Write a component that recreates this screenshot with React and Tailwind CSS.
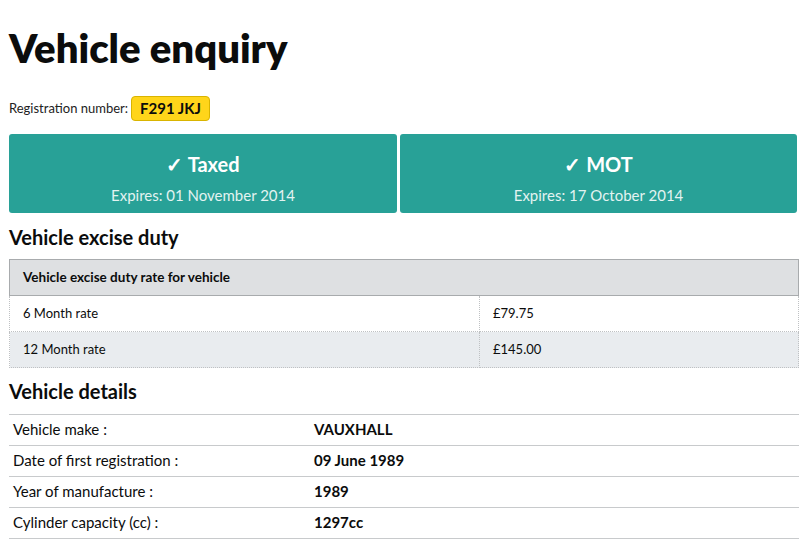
export default function App() {
  const rates = [
    { label: "6 Month rate", value: "£79.75", bg: "bg-white" },
    { label: "12 Month rate", value: "£145.00", bg: "bg-[#e9ecef]" },
  ];

  const details = [
    { label: "Vehicle make :", value: "VAUXHALL" },
    { label: "Date of first registration :", value: "09 June 1989" },
    { label: "Year of manufacture :", value: "1989" },
    { label: "Cylinder capacity (cc) :", value: "1297cc" },
  ];

  return (
    <div className="min-h-[541px] bg-white pl-[9px] pr-px text-[#0b0c0c] font-['Lato',sans-serif]">
      {/* Titulo */}
      <h1 className="pt-[25px] text-[40px] leading-[47px] font-extrabold">
        Vehicle enquiry
      </h1>

      {/* Matricula */}
      <div className="mt-[24px] flex items-center gap-[3px]">
        <span className="text-[13px] text-[#222]">Registration number:</span>
        <span className="rounded-[4px] border border-[#d9b400] bg-[#ffd51a] px-[8px] h-[25px] flex items-center text-[15px] font-bold">
          F291 JKJ
        </span>
      </div>

      {/* Estado */}
      <div className="mt-[13px] flex gap-[3px] pr-[2px]">
        <div className="w-[388px] h-[79px] rounded-[3px] bg-[#28a197] text-white flex flex-col items-center pt-[18px]">
          <p className="text-[20px] font-bold leading-[24px]">✓ Taxed</p>
          <p className="mt-[9px] text-[15px] text-[#e3f3f1] leading-[20px]">Expires: 01 November 2014</p>
        </div>
        <div className="flex-1 h-[79px] rounded-[3px] bg-[#28a197] text-white flex flex-col items-center pt-[18px]">
          <p className="text-[20px] font-bold leading-[24px]">✓ MOT</p>
          <p className="mt-[9px] text-[15px] text-[#e3f3f1] leading-[20px]">Expires: 17 October 2014</p>
        </div>
      </div>

      {/* Impuesto */}
      <h2 className="mt-[12px] text-[20px] font-bold leading-[24px]">Vehicle excise duty</h2>
      <table className="mt-[10px] w-full border-collapse text-[13px]">
        <thead>
          <tr>
            <th colSpan={2} className="h-[36px] border border-[#a8abad] bg-[#dee0e2] px-[13px] text-left text-[13.5px] font-bold">
              Vehicle excise duty rate for vehicle
            </th>
          </tr>
        </thead>
        <tbody>
          {rates.map((r) => (
            <tr key={r.label} className={r.bg}>
              <td className="h-[36px] w-[470px] border border-dotted border-[#bfc1c3] px-[13px]">{r.label}</td>
              <td className="h-[36px] border border-dotted border-[#bfc1c3] px-[13px]">{r.value}</td>
            </tr>
          ))}
        </tbody>
      </table>

      {/* Detalles */}
      <h2 className="mt-[11px] text-[20px] font-bold leading-[24px]">Vehicle details</h2>
      <div className="mt-[11px] border-t border-[#c8cacc] text-[15px]">
        {details.map((d) => (
          <div key={d.label} className="flex h-[31px] items-center pb-[2px] border-b border-[#c8cacc]">
            <span className="w-[305px] pl-[4px]">{d.label}</span>
            <span className="font-bold">{d.value}</span>
          </div>
        ))}
      </div>
    </div>
  );
}
